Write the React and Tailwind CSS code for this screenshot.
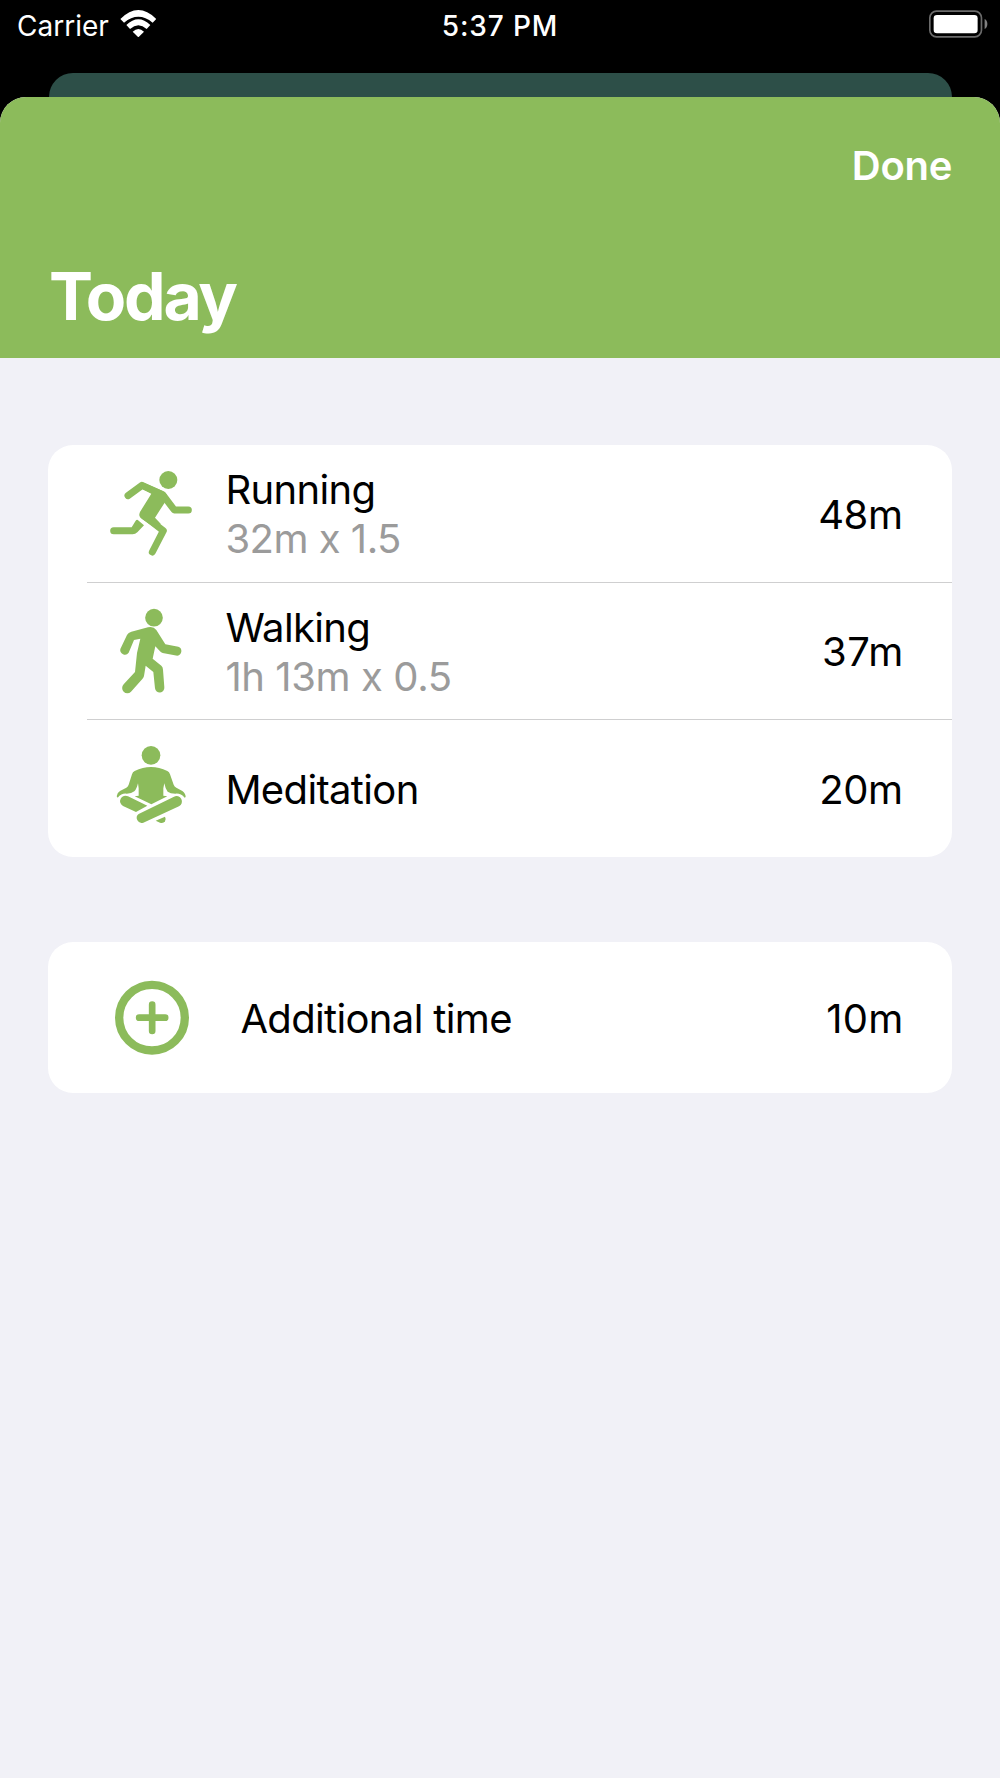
function WifiIcon() {
  return (
    <svg viewBox="0 0 110 82" className="w-[36.7px] h-[27.3px]" fill="white">
      <path d="M1 27 Q55 -27 109 27 L98 38 Q55 2 12 38 Z" />
      <path d="M19 45 Q55 11 91 45 L80 57 Q55 35 30 57 Z" />
      <path d="M38 65 Q55 49 72 65 L55 82 Z" />
    </svg>
  );
}

function BatteryIcon() {
  return (
    <svg viewBox="0 0 178 84" className="w-[59.3px] h-[28px]">
      <rect x="2.5" y="3.5" width="155" height="77" rx="20" fill="none" stroke="#6b6b6b" strokeWidth="5" />
      <rect x="14" y="15" width="132" height="55" rx="10" fill="white" />
      <path d="M167 27 C178 32 178 52 167 57 Z" fill="#808080" />
    </svg>
  );
}

function RunningIcon() {
  return (
    <svg viewBox="0 0 330 330" className="w-[110px] h-[110px]" fill="#8cbb5b" stroke="#8cbb5b">
      <circle cx="205" cy="60" r="27" stroke="none" />
      <g fill="none" strokeWidth="21" strokeLinecap="round" strokeLinejoin="round">
        <path d="M84 107 L126 76 L188 104 L223 150 H265" />
        <path d="M130 166 L190 212 L157 276" />
      </g>
      <path d="M126 66 L188 93 Q196 97 201 105 L194 128 L165 173 L182 191 L170 207 L126 177 Q114 169 120 156 L154 101 L128 88 Z" stroke="none" />
      <path d="M41 202 H95 L107 182 Q111 177 116 182 L132 196 L112 217 Q106 223 98 223 H41 A10.5 10.5 0 0 1 41 202 Z" stroke="none" />
    </svg>
  );
}

function WalkingIcon() {
  return (
    <svg viewBox="0 0 330 330" className="w-[110px] h-[110px]" fill="#8cbb5b">
      <circle cx="162" cy="62" r="26.5" />
      <path d="M94 104 L144 91 Q160 87 169 99 L196 142 L235 149 A14 14 0 0 1 232 176 L188 168 Q183 167 180 163 L166 148 L158 185 L184 206 Q189 211 189 218 L193 271 A14 14 0 0 1 165 274 L160 225 L137 206 L132 237 Q131 242 127 246 L93 284 A15 15 0 0 1 71 262 L105 225 L111 168 L121 125 L102 129 L86 167 A14 14 0 0 1 61 156 L81 114 Q85 107 94 104 Z" />
    </svg>
  );
}

function MeditationIcon() {
  return (
    <svg viewBox="0 0 330 330" className="w-[110px] h-[110px]" fill="#8cbb5b">
      <circle cx="153" cy="61" r="28" />
      <path d="M104 108 Q153 84 202 108 Q208 111 210 118 L221 149 Q223 155 229 158 L247 168 Q257 175 257 186 L254 188 Q242 174 226 176 Q211 176 203 170 Q196 162 193 145 L190 160 V182 L202 184 L154 208 L104 184 L116 182 V160 L114 145 Q110 162 103 169 Q95 176 80 176 Q65 174 53 188 L50 184 Q51 173 60 168 L79 158 Q84 155 86 149 L96 118 Q98 111 104 108 Z" />
      <path d="M84 184 L142 212 L108 231 L69 213 A16 16 0 0 1 84 184 Z" />
      <path d="M222 185 A16 16 0 0 1 237 214 L130 263 A15 15 0 0 1 116 237 Z" />
      <path d="M167 257 L195 245 Q199 252 195 259 Q190 266 180 263 Z" />
    </svg>
  );
}

function PlusIcon() {
  return (
    <svg viewBox="0 0 330 330" className="w-[110px] h-[110px]" fill="none" stroke="#8cbb5b">
      <circle cx="156" cy="158" r="98.5" strokeWidth="25" />
      <path d="M117.500 158 H195.500 M156.500 119 V198" strokeWidth="20" strokeLinecap="round" />
    </svg>
  );
}

const activities = [
  { name: "Running", detail: "32m x 1.5", time: "48m", icon: RunningIcon, iconClass: "pt-[2px]", rowClass: "h-[137px]", textClass: "", detailClass: "tracking-[-0.5px]", timeClass: "tracking-[-0.4px]" },
  { name: "Walking", detail: "1h 13m x 0.5", time: "37m", icon: WalkingIcon, iconClass: "pt-[1px]", rowClass: "h-[137px] border-t", textClass: "pt-[2px]", detailClass: "tracking-[-0.4px]", timeClass: "tracking-[0.4px] -mr-px" },
  { name: "Meditation", time: "20m", icon: MeditationIcon, iconClass: "pt-[2px]", rowClass: "h-[138px] border-t", textClass: "pt-[2px]", timeClass: "tracking-[-0.4px]" },
];

function StatusBar() {
  return (
    <div className="grid grid-cols-3 h-[73px] pt-2 items-start text-white text-[28px] leading-[36px]">
      <div className="flex gap-[11px] pl-[17px]">
        <span>Carrier</span>
        <div className="pt-[2px]">
          <WifiIcon />
        </div>
      </div>
      <div className="text-center font-medium tracking-[0.9px]">5:37 PM</div>
      <div className="flex justify-end pr-[12px] pt-[2px]">
        <BatteryIcon />
      </div>
    </div>
  );
}

function ActivityRow({ activity }) {
  const Icon = activity.icon;
  return (
    <div className="flex">
      <div className="w-[39px] shrink-0" />
      <div className={`flex flex-1 items-center pr-[49px] border-[#cfcfd0] ${activity.rowClass}`}>
        <div className={`ml-[13px] w-[125px] shrink-0 ${activity.iconClass}`}>
          <Icon />
        </div>
        <div className={`flex-1 leading-[49px] ${activity.textClass}`}>
          <div className="tracking-[-0.65px]">{activity.name}</div>
          {activity.detail && (
            <div className={`text-[#9b9b9b] ${activity.detailClass}`}>{activity.detail}</div>
          )}
        </div>
        <div className={`pt-[2px] ${activity.timeClass}`}>{activity.time}</div>
      </div>
    </div>
  );
}

export default function App() {
  return (
    <div className="w-[1000px] h-[1778px] overflow-hidden bg-black font-['Inter',sans-serif] text-[40px] text-black">
      <StatusBar />
      {/* edge of the screen behind the sheet */}
      <div className="mx-[48.500px] h-[48px] -mb-6 rounded-t-[24px] bg-[#2d4f48]" />

      <div className="relative h-[1681px] rounded-t-[26px] overflow-hidden bg-[#f1f1f7]">
        <header className="h-[261px] bg-[#8cbb5b] text-white px-[48px]">
          <div className="flex justify-end pt-[45px] leading-[48px] font-semibold tracking-[-0.3px]">Done</div>
          <h1 className="mt-[66px] ml-[1px] text-[66px] leading-[80px] font-bold tracking-[-2.2px]">Today</h1>
        </header>

        <main className="px-[48.400px] pt-[87px]">
          <section className="h-[412px] rounded-[25px] bg-white">
            {activities.map((activity) => (
              <ActivityRow key={activity.name} activity={activity} />
            ))}
          </section>

          <section className="mt-[85px] h-[151px] rounded-[25px] bg-white flex items-center pl-[52px] pr-[48px]">
            <div className="pt-[4px]">
              <PlusIcon />
            </div>
            <div className="ml-[30px] flex-1 tracking-[-0.65px] pt-[2px]">Additional time</div>
            <div className="tracking-[0.3px] pt-[2px]">10m</div>
          </section>
        </main>
      </div>
    </div>
  );
}
